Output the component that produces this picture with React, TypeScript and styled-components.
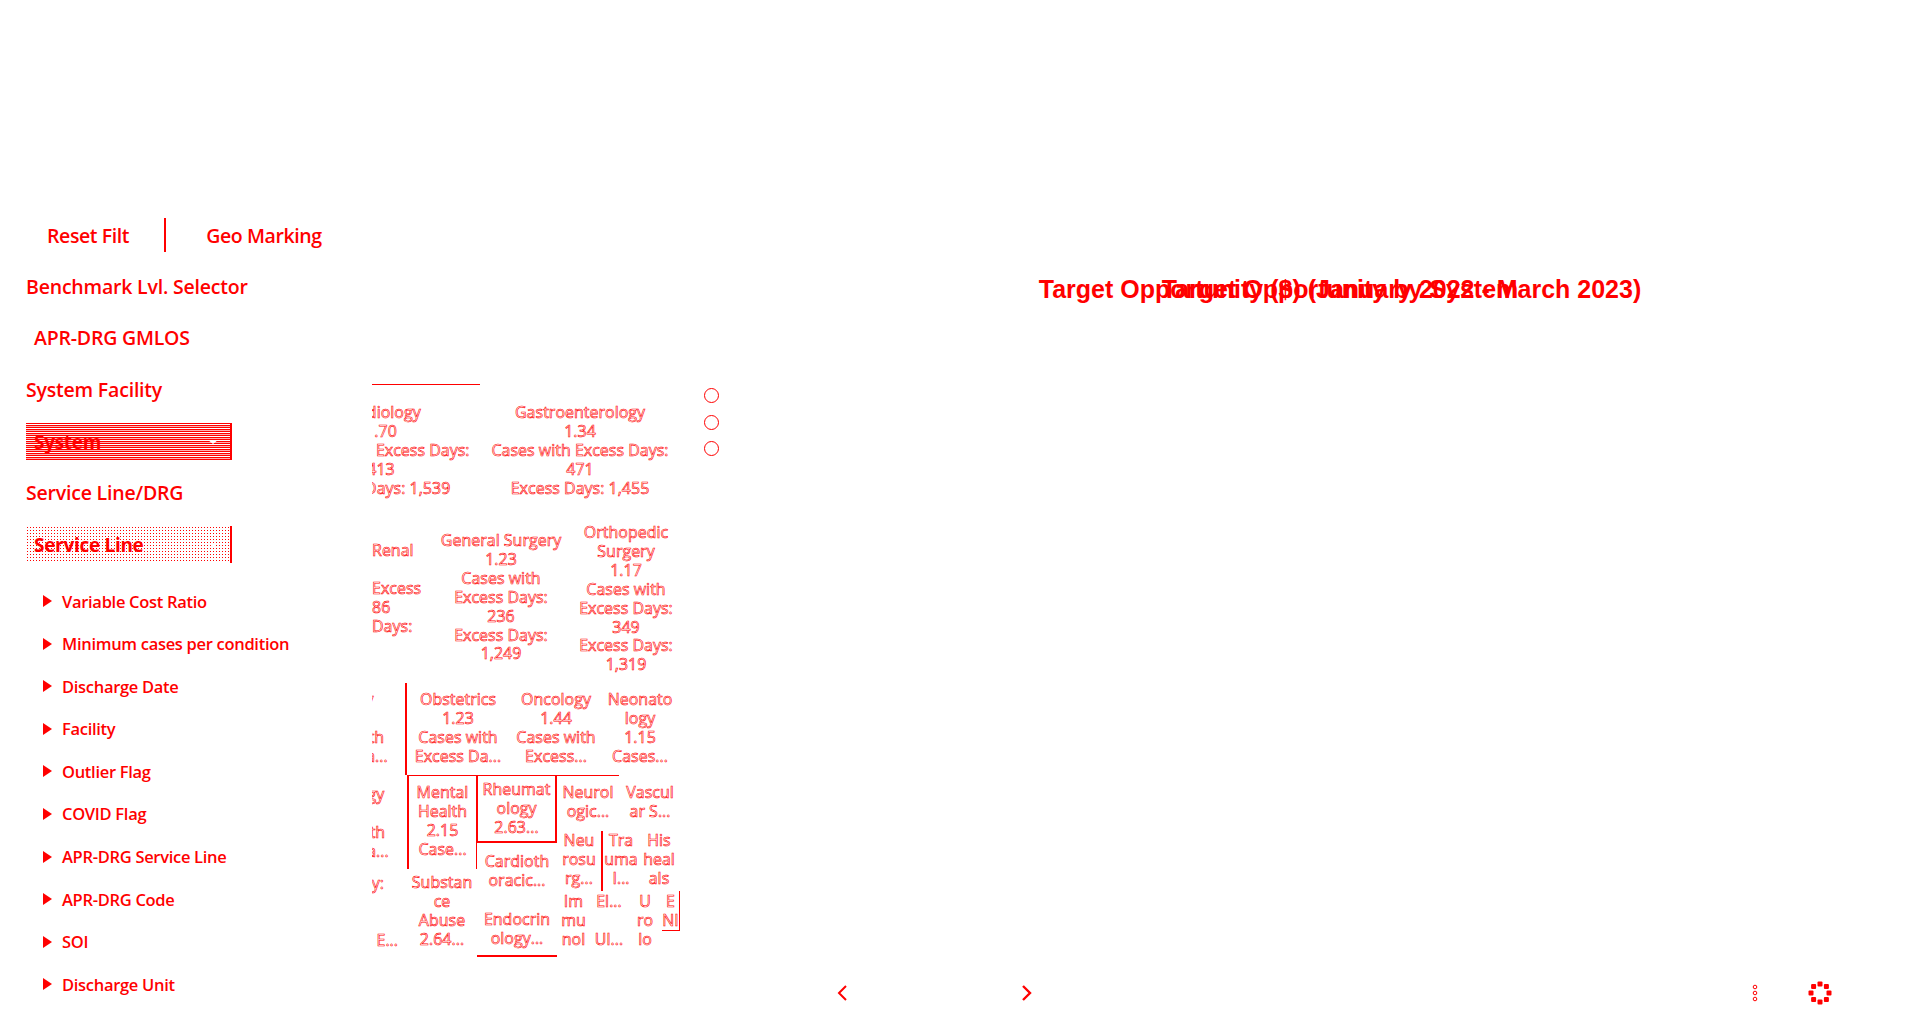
import React from "react";
import styled, { createGlobalStyle } from "styled-components";

const RED = "#ff0000";

const GlobalStyle = createGlobalStyle`
  html, body {
    margin: 0;
    padding: 0;
    background: #fff;
  }
`;

const Page = styled.div`
  display: grid;
  grid-template-columns: 372px 388px 1fr;
  width: 1920px;
  height: 1030px;
  overflow: hidden;
  color: ${RED};
  font-family: "Open Sans", "Liberation Sans", sans-serif;
`;

/* ---------- left filter pane ---------- */

const Sidebar = styled.aside`
  display: flex;
  flex-direction: column;
  padding: 217px 0 0 26px;
`;

const ActionRow = styled.div`
  display: flex;
  align-items: center;
  height: 36px;
  margin-bottom: 15.5px;
  padding-left: 21px;
  font-size: 19.5px;
  font-weight: 600;
  letter-spacing: -0.4px;
`;

const ActionDivider = styled.span`
  width: 2px;
  height: 34px;
  margin: 0 40px 0 35px;
  background: ${RED};
`;

const Heading = styled.div<{ $indent?: number }>`
  height: 36px;
  margin-bottom: 15.5px;
  padding-left: ${(p) => p.$indent ?? 0}px;
  font-size: 19.5px;
  font-weight: 600;
  line-height: 36px;
  letter-spacing: -0.2px;
`;

const Slicer = styled.div<{ $dotted?: boolean }>`
  display: flex;
  align-items: center;
  justify-content: space-between;
  box-sizing: border-box;
  width: 206px;
  height: 37px;
  margin-bottom: 14.5px;
  padding: 0 12px 0 8px;
  border-right: 2px solid ${RED};
  font-size: 19px;
  font-weight: 700;
  letter-spacing: -0.3px;
  background-image: ${(p) =>
    p.$dotted
      ? `radial-gradient(${RED} 0.8px, transparent 1px)`
      : `repeating-linear-gradient(180deg, ${RED} 0 1px, #fff 1px 2px, ${RED} 2px 3px, #ffb0b0 3px 4px)`};
  background-size: ${(p) => (p.$dotted ? "3px 3px" : "auto")};
`;

const SlicerCaret = styled.span`
  width: 0;
  height: 0;
  border-left: 5px solid transparent;
  border-right: 5px solid transparent;
  border-top: 4px solid #fff;
`;

const FilterList = styled.ul`
  display: flex;
  flex-direction: column;
  gap: 18.6px;
  margin: 11.5px 0 0;
  padding: 0 0 0 17px;
  list-style: none;
`;

const FilterItem = styled.li`
  display: flex;
  align-items: center;
  gap: 10px;
  height: 24px;
  font-size: 16.5px;
  font-weight: 600;
  letter-spacing: -0.3px;
`;

const Triangle = styled.span`
  width: 0;
  height: 0;
  border-top: 6px solid transparent;
  border-bottom: 6px solid transparent;
  border-left: 9px solid ${RED};
`;

/* ---------- treemap visual ---------- */

const TreemapColumn = styled.section`
  display: flex;
  align-items: flex-start;
  padding-top: 384px;
`;

const TreemapClip = styled.div`
  flex: none;
  width: 312px;
  height: 580px;
  overflow: hidden;
`;

const Treemap = styled.div`
  display: flex;
  flex-direction: column;
  width: 402px;
  margin-left: -90px;
`;

const Row = styled.div<{ $h: number; $pad?: number }>`
  display: flex;
  height: ${(p) => p.$h}px;
  padding-left: ${(p) => p.$pad ?? 0}px;
`;

const Stack = styled.div<{ $w?: number }>`
  display: flex;
  flex: ${(p) => (p.$w ? "none" : "1")};
  flex-direction: column;
  width: ${(p) => (p.$w ? `${p.$w}px` : "auto")};
`;

const Cell = styled.div<{
  $w?: number;
  $h?: number;
  $top?: number;
  $lead?: number;
  $flush?: boolean;
  $line?: string;
}>`
  flex: none;
  box-sizing: border-box;
  width: ${(p) => (p.$w ? `${p.$w}px` : "100%")};
  height: ${(p) => (p.$h ? `${p.$h}px` : "100%")};
  padding: ${(p) => p.$top ?? 0}px 0 0 ${(p) => p.$lead ?? 0}px;
  font-size: 16px;
  line-height: 18.9px;
  text-align: ${(p) => (p.$flush ? "left" : "center")};
  white-space: nowrap;
  color: #fff;
  -webkit-text-stroke: 0.6px ${RED};
  ${(p) => p.$line ?? ""}
`;

const LEFT_LINE = `border-left: 2px solid ${RED};`;
const TOP_LINE = `border-top: 1px solid ${RED};`;
const BOX_LINE = `border-right: 2px solid ${RED}; border-bottom: 2px solid ${RED}; border-left: 1px solid ${RED};`;
const BOTTOM_LINE = `border-bottom: 2px solid ${RED};`;
const CORNER_LINE = `border-right: 1px solid ${RED}; border-bottom: 1px solid ${RED};`;

const Lines: React.FC<{ text: string }> = ({ text }) => (
  <>
    {text.split("|").map((line, i) => (
      <div key={i}>{line || "\u00a0"}</div>
    ))}
  </>
);

const FirstBorder = styled.div`
  width: 108px;
  height: 1px;
  margin-left: 90px;
  background: ${RED};
`;

const RadioStack = styled.div`
  display: flex;
  flex-direction: column;
  gap: 11.5px;
  margin: 4px 0 0 20px;
`;

const Radio = styled.span`
  display: block;
  box-sizing: border-box;
  width: 15px;
  height: 15px;
  border: 1px solid ${RED};
  border-radius: 50%;
`;

/* ---------- report area on the right ---------- */

const Report = styled.section`
  display: flex;
  flex-direction: column;
  padding-top: 275px;
`;

const TitleBox = styled.div`
  position: relative;
  height: 28px;
  text-align: center;
`;

const Title = styled.h1<{ $over?: boolean }>`
  margin: 0;
  font-family: "Liberation Sans", Arial, sans-serif;
  font-size: 25px;
  font-weight: 700;
  line-height: 28px;
  letter-spacing: 0;
  ${(p) => (p.$over ? "position: absolute; inset: 0;" : "")}
`;

const Footer = styled.footer`
  display: flex;
  align-items: center;
  height: 30px;
  margin-top: auto;
  margin-bottom: 22px;
  padding: 0 88px 0 77px;
`;

const Pager = styled.div`
  display: flex;
  align-items: center;
  gap: 175px;
  margin-right: auto;
`;

const FooterIcons = styled.div`
  display: flex;
  align-items: center;
  gap: 50px;
`;

const ChevronLeft = () => (
  <svg width="10" height="16" viewBox="0 0 10 16" fill="none" stroke={RED} strokeWidth="2">
    <path d="M9 1L2 8l7 7" />
  </svg>
);

const ChevronRight = () => (
  <svg width="10" height="16" viewBox="0 0 10 16" fill="none" stroke={RED} strokeWidth="2.4">
    <path d="M1 1l7 7-7 7" />
  </svg>
);

const MoreDots = () => (
  <svg width="6" height="18" viewBox="0 0 6 18" fill="none" stroke={RED} strokeWidth="1">
    <circle cx="3" cy="3" r="1.8" />
    <circle cx="3" cy="9" r="1.8" />
    <circle cx="3" cy="15" r="1.8" />
  </svg>
);

const SpinnerGear = () => (
  <svg width="24" height="24" viewBox="0 0 24 24" fill={RED}>
    {[
      [12, 3],
      [18.4, 5.6],
      [21, 12],
      [18.4, 18.4],
      [12, 21],
      [5.6, 18.4],
      [3, 12],
      [5.6, 5.6],
    ].map(([x, y]) => (
      <rect key={`${x}-${y}`} x={x - 2.5} y={y - 2.5} width="5" height="5" rx="1" />
    ))}
  </svg>
);

const filters = [
  "Variable Cost Ratio",
  "Minimum cases per condition",
  "Discharge Date",
  "Facility",
  "Outlier Flag",
  "COVID Flag",
  "APR-DRG Service Line",
  "APR-DRG Code",
  "SOI",
  "Discharge Unit",
];

const App: React.FC = () => {
  return (
    <Page>
      <GlobalStyle />
      <Sidebar>
        <ActionRow>
          Reset Filt
          <ActionDivider />
          Geo Marking
        </ActionRow>
        <Heading>Benchmark Lvl. Selector</Heading>
        <Heading $indent={8}>APR-DRG GMLOS</Heading>
        <Heading>System Facility</Heading>
        <Slicer>
          System
          <SlicerCaret />
        </Slicer>
        <Heading>Service Line/DRG</Heading>
        <Slicer $dotted>
          Service Line
          <SlicerCaret />
        </Slicer>
        <FilterList>
          {filters.map((name) => (
            <FilterItem key={name}>
              <Triangle />
              {name}
            </FilterItem>
          ))}
        </FilterList>
      </Sidebar>

      <TreemapColumn>
        <TreemapClip>
          <Treemap>
            <FirstBorder />
            <Row $h={128}>
              <Cell $w={198} $top={18}>
                <Lines text="Cardiology|1.70|Cases with Excess Days:|413|Excess Days: 1,539" />
              </Cell>
              <Cell $w={200} $top={18}>
                <Lines text="Gastroenterology|1.34|Cases with Excess Days:|471|Excess Days: 1,455" />
              </Cell>
            </Row>
            <Row $h={170} $pad={62}>
              <Cell $w={94} $top={28} $lead={28} $flush>
                <Lines text="Renal||Excess|86|Days:" />
              </Cell>
              <Cell $w={126} $top={18}>
                <Lines text="General Surgery|1.23|Cases with|Excess Days:|236|Excess Days:|1,249" />
              </Cell>
              <Cell $w={124} $top={10}>
                <Lines text="Orthopedic|Surgery|1.17|Cases with|Excess Days:|349|Excess Days:|1,319" />
              </Cell>
            </Row>
            <Row $h={92}>
              <Cell $w={123} $top={7} $lead={2}>
                <Lines text="Urology|1.12|Cases with|Excess Da..." />
              </Cell>
              <Cell $w={104} $top={7} $line={LEFT_LINE}>
                <Lines text="Obstetrics|1.23|Cases with|Excess Da..." />
              </Cell>
              <Cell $w={94} $top={7}>
                <Lines text="Oncology|1.44|Cases with|Excess..." />
              </Cell>
              <Cell $w={74} $top={7}>
                <Lines text="Neonato|logy|1.15|Cases..." />
              </Cell>
            </Row>
            <Row $h={186}>
              <Stack $w={125}>
                <Cell $h={99} $top={10} $lead={2}>
                  <Lines text="Neurology|2.01|Cases with|Excess Da..." />
                </Cell>
                <Cell $h={80} $lead={2}>
                  <Lines text="Radiology:|1.90|2.50|Cases with E..." />
                </Cell>
              </Stack>
              <Stack $w={70}>
                <Cell $h={94} $top={7} $line={`${TOP_LINE} ${LEFT_LINE} border-right: 1px solid ${RED};`}>
                  <Lines text="Mental|Health|2.15|Case..." />
                </Cell>
                <Cell $h={90} $top={4}>
                  <Lines text="Substan|ce|Abuse|2.64..." />
                </Cell>
              </Stack>
              <Stack $w={80}>
                <Cell $h={68} $top={4} $line={`${TOP_LINE} ${BOX_LINE}`}>
                  <Lines text="Rheumat|ology|2.63..." />
                </Cell>
                <Cell $h={58} $top={9}>
                  <Lines text="Cardioth|oracic..." />
                </Cell>
                <Cell $h={56} $top={9} $line={BOTTOM_LINE}>
                  <Lines text="Endocrin|ology..." />
                </Cell>
              </Stack>
              <Stack>
                <Row $h={56}>
                  <Cell $w={62} $top={7} $line={TOP_LINE}>
                    <Lines text="Neurol|ogic..." />
                  </Cell>
                  <Cell $w={62} $top={8}>
                    <Lines text="Vascul|ar S..." />
                  </Cell>
                </Row>
                <Row $h={60}>
                  <Cell $w={44}>
                    <Lines text="Neu|rosu|rg..." />
                  </Cell>
                  <Cell $w={38} $line={LEFT_LINE}>
                    <Lines text="Tra|uma|I..." />
                  </Cell>
                  <Cell $w={40}>
                    <Lines text="His|heal|als" />
                  </Cell>
                </Row>
                <Row $h={60}>
                  <Cell $w={33} $top={1}>
                    <Lines text="Im|mu|nol" />
                  </Cell>
                  <Cell $w={38} $top={1}>
                    <Lines text="El...||Ul..." />
                  </Cell>
                  <Cell $w={34} $top={1}>
                    <Lines text="U|ro|lo" />
                  </Cell>
                  <Cell $w={18} $h={40} $top={1} $line={CORNER_LINE}>
                    <Lines text="E|NI" />
                  </Cell>
                </Row>
              </Stack>
            </Row>
          </Treemap>
        </TreemapClip>
        <RadioStack>
          <Radio />
          <Radio />
          <Radio />
        </RadioStack>
      </TreemapColumn>

      <Report>
        <TitleBox>
          <Title>Target Opportunity ($) (January 2022 - March 2023)</Title>
          <Title $over>Target Opportunity by System</Title>
        </TitleBox>
        <Footer>
          <Pager>
            <ChevronLeft />
            <ChevronRight />
          </Pager>
          <FooterIcons>
            <MoreDots />
            <SpinnerGear />
          </FooterIcons>
        </Footer>
      </Report>
    </Page>
  );
};

export default App;
